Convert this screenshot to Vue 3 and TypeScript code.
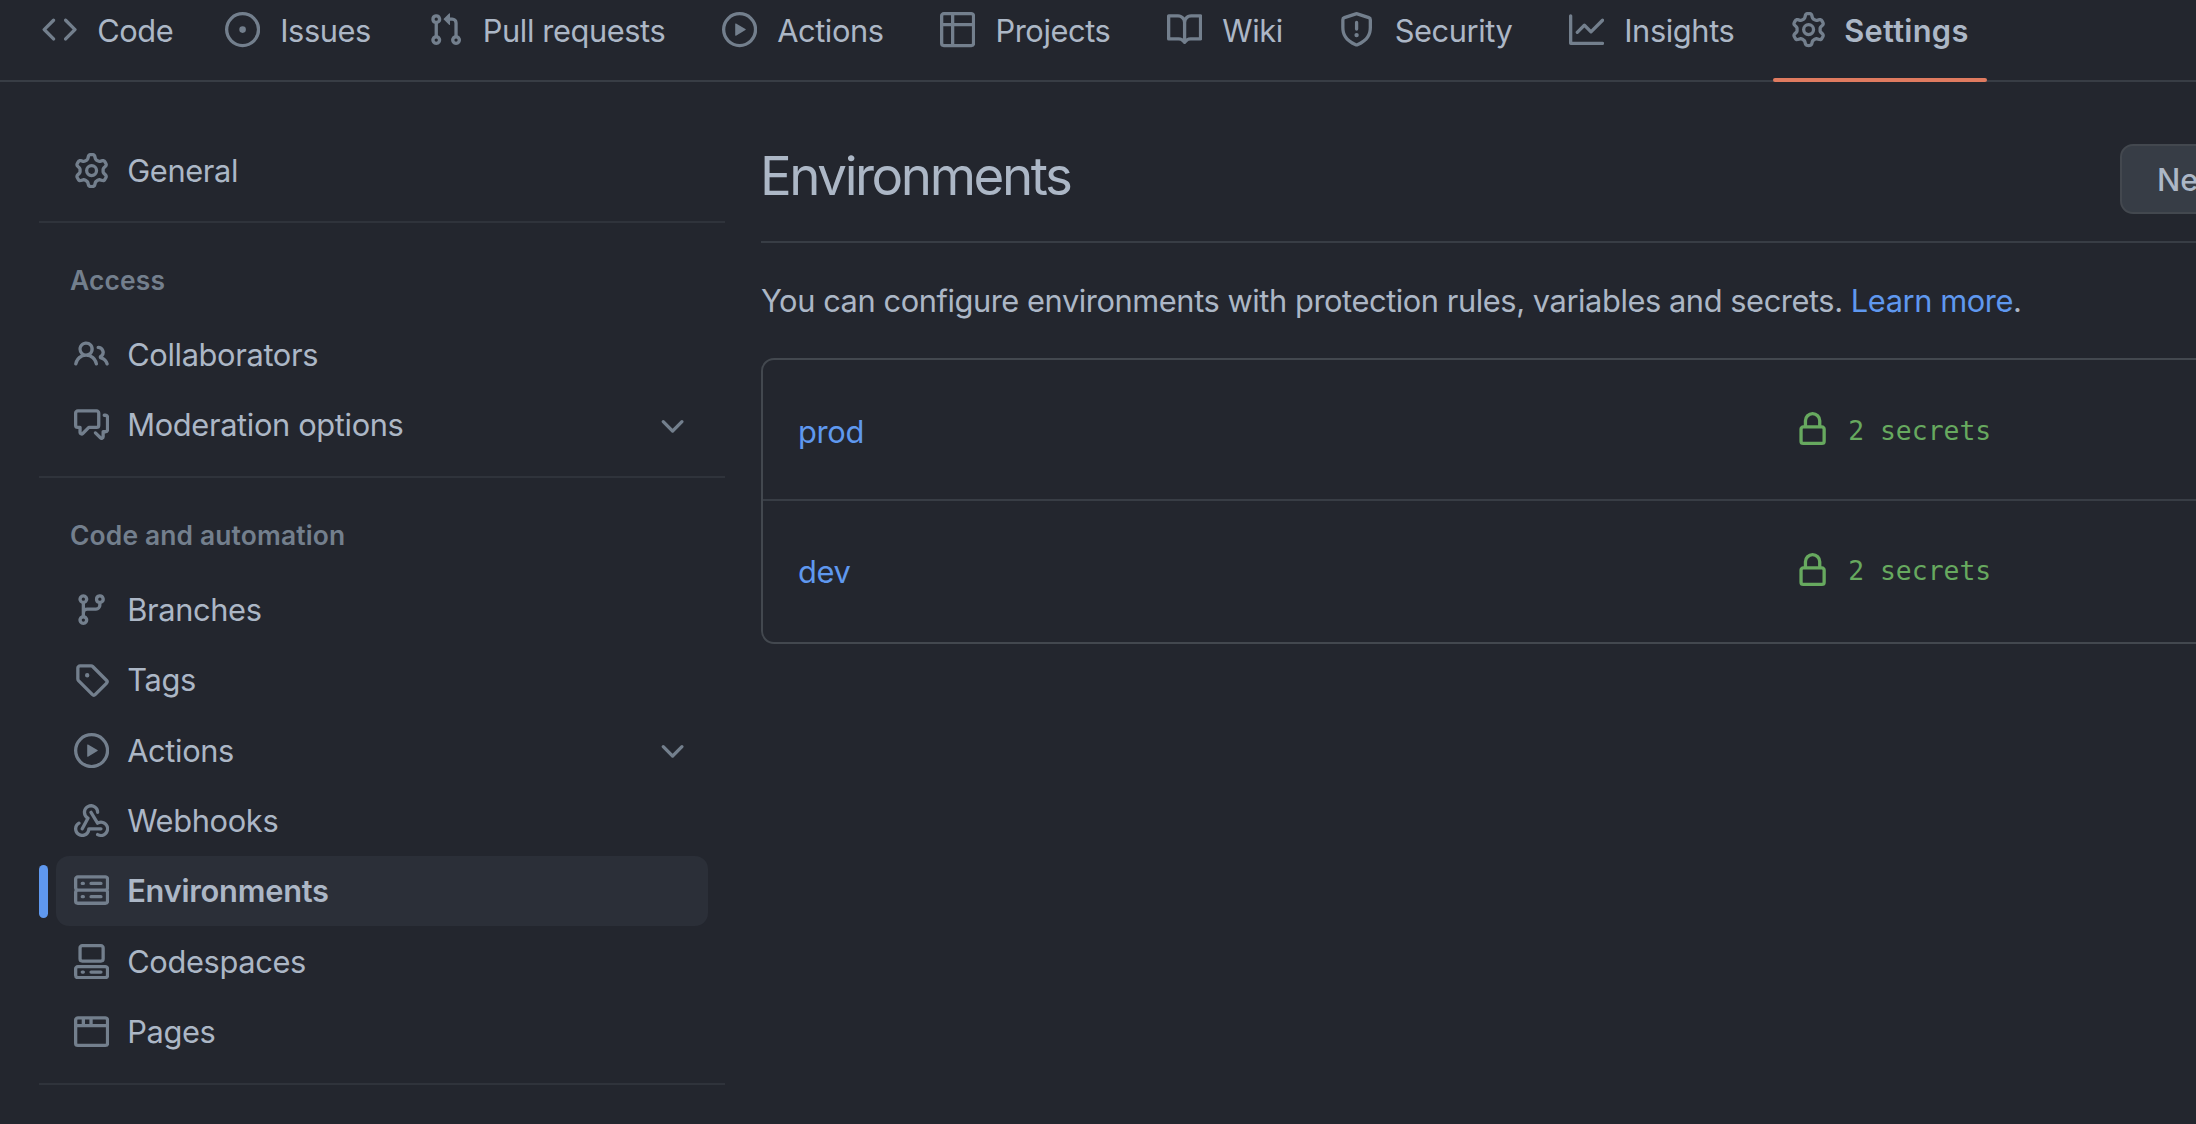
<script setup lang="ts">
const icons: Record<string, string> = {
  code: 'm11.28 3.22 4.25 4.25a.75.75 0 0 1 0 1.06l-4.25 4.25a.749.749 0 0 1-1.275-.326.749.749 0 0 1 .215-.734L13.94 8l-3.72-3.72a.749.749 0 0 1 .326-1.275.749.749 0 0 1 .734.215Zm-6.56 0a.751.751 0 0 1 1.042.018.751.751 0 0 1 .018 1.042L2.06 8l3.72 3.72a.749.749 0 0 1-.326 1.275.749.749 0 0 1-.734-.215L.47 8.53a.75.75 0 0 1 0-1.06Z',
  issue: 'M8 9.5a1.5 1.5 0 1 0 0-3 1.5 1.5 0 0 0 0 3Z M8 0a8 8 0 1 1 0 16A8 8 0 0 1 8 0ZM1.5 8a6.5 6.5 0 1 0 13 0 6.5 6.5 0 0 0-13 0Z',
  pull: 'M1.5 3.25a2.25 2.25 0 1 1 3 2.122v5.256a2.251 2.251 0 1 1-1.5 0V5.372A2.25 2.25 0 0 1 1.5 3.25Zm5.677-.177L9.573.677A.25.25 0 0 1 10 .854V2.5h1A2.5 2.5 0 0 1 13.5 5v5.628a2.251 2.251 0 1 1-1.5 0V5a1 1 0 0 0-1-1h-1v1.646a.25.25 0 0 1-.427.177L7.177 3.427a.25.25 0 0 1 0-.354ZM3.75 2.5a.75.75 0 1 0 0 1.5.75.75 0 0 0 0-1.5Zm0 9.5a.75.75 0 1 0 0 1.5.75.75 0 0 0 0-1.5Zm8.25.75a.75.75 0 1 0 1.5 0 .75.75 0 0 0-1.5 0Z',
  play: 'M8 0a8 8 0 1 1 0 16A8 8 0 0 1 8 0ZM1.5 8a6.5 6.5 0 1 0 13 0 6.5 6.5 0 0 0-13 0Zm4.879-2.773 4.264 2.559a.25.25 0 0 1 0 .428l-4.264 2.559A.25.25 0 0 1 6 10.559V5.442a.25.25 0 0 1 .379-.215Z',
  table: 'M0 1.75C0 .784.784 0 1.75 0h12.5C15.216 0 16 .784 16 1.75v12.5A1.75 1.75 0 0 1 14.25 16H1.75A1.75 1.75 0 0 1 0 14.25ZM6.5 6.5v8h7.75a.25.25 0 0 0 .25-.25V6.5Zm8-1.5V1.75a.25.25 0 0 0-.25-.25H6.5V5Zm-13 1.5v7.75c0 .138.112.25.25.25H5v-8ZM5 5V1.5H1.75a.25.25 0 0 0-.25.25V5Z',
  book: 'M0 1.75A.75.75 0 0 1 .75 1h4.253c1.227 0 2.317.59 3 1.501A3.743 3.743 0 0 1 11.006 1h4.245a.75.75 0 0 1 .75.75v10.5a.75.75 0 0 1-.75.75h-4.507a2.25 2.25 0 0 0-1.591.659l-.622.621a.75.75 0 0 1-1.06 0l-.622-.621A2.25 2.25 0 0 0 5.258 13H.75a.75.75 0 0 1-.75-.75Zm7.251 10.324.004-5.073-.002-2.253A2.25 2.25 0 0 0 5.003 2.5H1.5v9h3.757a3.75 3.75 0 0 1 1.994.574ZM8.755 4.75l-.004 7.322a3.752 3.752 0 0 1 1.992-.572H14.5v-9h-3.495a2.25 2.25 0 0 0-2.25 2.25Z',
  shield: 'M7.467.133a1.748 1.748 0 0 1 1.066 0l5.25 1.68A1.75 1.75 0 0 1 15 3.48V7c0 1.566-.32 3.182-1.303 4.682-.983 1.498-2.585 2.813-5.032 3.855a1.697 1.697 0 0 1-1.33 0c-2.447-1.042-4.049-2.357-5.032-3.855C1.32 10.182 1 8.566 1 7V3.48a1.75 1.75 0 0 1 1.217-1.667Zm.61 1.429a.25.25 0 0 0-.153 0l-5.25 1.68a.25.25 0 0 0-.174.238V7c0 1.358.275 2.666 1.057 3.86.784 1.194 2.121 2.34 4.366 3.297a.196.196 0 0 0 .154 0c2.245-.956 3.582-2.104 4.366-3.298C13.225 9.666 13.5 8.36 13.5 7V3.48a.251.251 0 0 0-.174-.237l-5.25-1.68ZM8.75 4.75v3a.75.75 0 0 1-1.5 0v-3a.75.75 0 0 1 1.5 0ZM9 10.5a1 1 0 1 1-2 0 1 1 0 0 1 2 0Z',
  graph: 'M1.5 1.75V13.5h13.75a.75.75 0 0 1 0 1.5H.75a.75.75 0 0 1-.75-.75V1.75a.75.75 0 0 1 1.5 0Zm14.28 2.53-5.25 5.25a.75.75 0 0 1-1.06 0L7 7.06 4.28 9.78a.751.751 0 0 1-1.042-.018.751.751 0 0 1-.018-1.042l3.25-3.25a.75.75 0 0 1 1.06 0L10 7.94l4.72-4.72a.751.751 0 0 1 1.042.018.751.751 0 0 1 .018 1.042Z',
  gear: 'M8 0a8.2 8.2 0 0 1 .701.031C9.444.095 9.99.645 10.16 1.29l.288 1.107c.018.066.079.158.212.224.231.114.454.243.668.386.123.082.233.09.299.071l1.103-.303c.644-.176 1.392.021 1.82.63.27.385.506.792.704 1.218.315.675.111 1.422-.364 1.891l-.814.806c-.049.048-.098.147-.088.294.016.257.016.515 0 .772-.01.147.038.246.088.294l.814.806c.475.469.679 1.216.364 1.891a7.977 7.977 0 0 1-.704 1.217c-.428.61-1.176.807-1.82.63l-1.102-.302c-.067-.019-.177-.011-.3.071a5.909 5.909 0 0 1-.668.386c-.133.066-.194.158-.211.224l-.29 1.106c-.168.646-.715 1.196-1.458 1.26a8.006 8.006 0 0 1-1.402 0c-.743-.064-1.289-.614-1.458-1.26l-.289-1.106c-.018-.066-.079-.158-.212-.224a5.738 5.738 0 0 1-.668-.386c-.123-.082-.233-.09-.299-.071l-1.103.303c-.644.176-1.392-.021-1.82-.63a8.12 8.12 0 0 1-.704-1.218c-.315-.675-.111-1.422.363-1.891l.815-.806c.05-.048.098-.147.088-.294a6.214 6.214 0 0 1 0-.772c.01-.147-.038-.246-.088-.294l-.815-.806C.635 6.045.431 5.298.746 4.623a7.92 7.92 0 0 1 .704-1.217c.428-.61 1.176-.807 1.82-.63l1.102.302c.067.019.177.011.3-.071.214-.143.437-.272.668-.386.133-.066.194-.158.211-.224l.29-1.106C6.009.645 6.556.095 7.299.03 7.53.01 7.764 0 8 0Zm-.571 1.525c-.036.003-.108.036-.137.146l-.289 1.105c-.147.561-.549.967-.998 1.189-.173.086-.34.183-.5.29-.417.278-.97.423-1.529.27l-1.103-.303c-.109-.03-.175.016-.195.045-.22.312-.412.644-.573.99-.014.031-.021.11.059.19l.815.806c.411.406.562.957.53 1.456a4.709 4.709 0 0 0 0 .582c.032.499-.119 1.05-.53 1.456l-.815.806c-.081.08-.073.159-.059.19.162.346.353.677.573.989.02.03.085.076.195.046l1.102-.303c.56-.153 1.113-.008 1.53.27.161.107.328.204.501.29.447.222.85.629.997 1.189l.289 1.105c.029.109.101.143.137.146a6.6 6.6 0 0 0 1.142 0c.036-.003.108-.036.137-.146l.289-1.105c.147-.561.549-.967.998-1.189.173-.086.34-.183.5-.29.417-.278.97-.423 1.529-.27l1.103.303c.109.029.175-.016.195-.045.22-.313.411-.644.573-.99.014-.031.021-.11-.059-.19l-.815-.806c-.411-.406-.562-.957-.53-1.456a4.709 4.709 0 0 0 0-.582c-.032-.499.119-1.05.53-1.456l.815-.806c.081-.08.073-.159.059-.19a6.464 6.464 0 0 0-.573-.989c-.02-.03-.085-.076-.195-.046l-1.102.303c-.56.153-1.113.008-1.53-.27a4.44 4.44 0 0 0-.501-.29c-.447-.222-.85-.629-.997-1.189l-.289-1.105c-.029-.11-.101-.143-.137-.146a6.6 6.6 0 0 0-1.142 0ZM11 8a3 3 0 1 1-6 0 3 3 0 0 1 6 0ZM9.5 8a1.5 1.5 0 1 0-3.001.001A1.5 1.5 0 0 0 9.5 8Z',
  people: 'M2 5.5a3.5 3.5 0 1 1 5.898 2.549 5.508 5.508 0 0 1 3.034 4.084.75.75 0 1 1-1.482.235 4 4 0 0 0-7.9 0 .75.75 0 0 1-1.482-.236A5.507 5.507 0 0 1 3.102 8.05 3.493 3.493 0 0 1 2 5.5ZM11 4a3.001 3.001 0 0 1 2.22 5.018 5.01 5.01 0 0 1 2.56 3.012.749.749 0 0 1-.885.954.752.752 0 0 1-.549-.514 3.507 3.507 0 0 0-2.522-2.372.75.75 0 0 1-.574-.73v-.352a.75.75 0 0 1 .416-.672A1.5 1.5 0 0 0 11 5.5.75.75 0 0 1 11 4Zm-5.5-.5a2 2 0 1 0-.001 3.999A2 2 0 0 0 5.5 3.5Z',
  discussion: 'M1.75 1h8.5c.966 0 1.75.784 1.75 1.75v5.5A1.75 1.75 0 0 1 10.25 10H7.061l-2.574 2.573A1.458 1.458 0 0 1 2 11.543V10h-.25A1.75 1.75 0 0 1 0 8.25v-5.5C0 1.784.784 1 1.75 1ZM1.5 2.75v5.5c0 .138.112.25.25.25h1a.75.75 0 0 1 .75.75v2.19l2.72-2.72a.749.749 0 0 1 .53-.22h3.5a.25.25 0 0 0 .25-.25v-5.5a.25.25 0 0 0-.25-.25h-8.5a.25.25 0 0 0-.25.25Zm13 2a.25.25 0 0 0-.25-.25h-.5a.75.75 0 0 1 0-1.5h.5c.966 0 1.75.784 1.75 1.75v5.5A1.75 1.75 0 0 1 14.25 12H14v1.543a1.458 1.458 0 0 1-2.487 1.03L9.22 12.28a.749.749 0 0 1 .326-1.275.749.749 0 0 1 .734.215l2.22 2.22v-2.19a.75.75 0 0 1 .75-.75h1a.25.25 0 0 0 .25-.25Z',
  chevron: 'M12.78 5.22a.749.749 0 0 1 0 1.06l-4.25 4.25a.749.749 0 0 1-1.06 0L3.22 6.28a.749.749 0 1 1 1.06-1.06L8 8.939l3.72-3.719a.749.749 0 0 1 1.06 0Z',
  branch: 'M9.5 3.25a2.25 2.25 0 1 1 3 2.122V6A2.5 2.5 0 0 1 10 8.5H6a1 1 0 0 0-1 1v1.128a2.251 2.251 0 1 1-1.5 0V5.372a2.25 2.25 0 1 1 1.5 0v1.836A2.493 2.493 0 0 1 6 7h4a1 1 0 0 0 1-1v-.628A2.25 2.25 0 0 1 9.5 3.25Zm-6 0a.75.75 0 1 0 1.5 0 .75.75 0 0 0-1.5 0Zm8.25-.75a.75.75 0 1 0 0 1.5.75.75 0 0 0 0-1.5ZM4.25 12a.75.75 0 1 0 0 1.5.75.75 0 0 0 0-1.5Z',
  tag: 'M1 7.775V2.75C1 1.784 1.784 1 2.75 1h5.025c.464 0 .91.184 1.238.513l6.25 6.25a1.75 1.75 0 0 1 0 2.474l-5.026 5.026a1.75 1.75 0 0 1-2.474 0l-6.25-6.25A1.752 1.752 0 0 1 1 7.775Zm1.5 0c0 .066.026.13.073.177l6.25 6.25a.25.25 0 0 0 .354 0l5.025-5.025a.25.25 0 0 0 0-.354l-6.25-6.25a.25.25 0 0 0-.177-.073H2.75a.25.25 0 0 0-.25.25ZM6 5a1 1 0 1 1 0 2 1 1 0 0 1 0-2Z',
  webhook: 'M5.5 4.25a2.25 2.25 0 0 1 4.5 0 .75.75 0 0 0 1.5 0 3.75 3.75 0 1 0-6.14 2.889l-2.272 4.258a.75.75 0 0 0 1.324.706L7 7.25a.75.75 0 0 0-.309-1.015A2.25 2.25 0 0 1 5.5 4.25Z M7.364 3.607a.75.75 0 0 1 1.03.257l2.608 4.349a3.75 3.75 0 1 1-.628 6.785.75.75 0 0 1 .752-1.299 2.25 2.25 0 1 0-.033-3.88.75.75 0 0 1-1.03-.256L7.107 4.636a.75.75 0 0 1 .257-1.03Z M2.9 8.776A.75.75 0 0 1 2.625 9.8 2.25 2.25 0 1 0 6 11.75a.75.75 0 0 1 .75-.751h5.5a.75.75 0 0 1 0 1.5H7.425a3.751 3.751 0 1 1-5.55-3.998.75.75 0 0 1 1.024.274Z',
  server: 'M1.75 1h12.5c.966 0 1.75.784 1.75 1.75v4c0 .372-.116.717-.314 1 .198.283.314.628.314 1v4a1.75 1.75 0 0 1-1.75 1.75H1.75A1.75 1.75 0 0 1 0 12.75v-4c0-.358.109-.707.314-1a1.739 1.739 0 0 1-.314-1v-4C0 1.784.784 1 1.75 1ZM1.5 2.75v4c0 .138.112.25.25.25h12.5a.25.25 0 0 0 .25-.25v-4a.25.25 0 0 0-.25-.25H1.75a.25.25 0 0 0-.25.25Zm.25 5.75a.25.25 0 0 0-.25.25v4c0 .138.112.25.25.25h12.5a.25.25 0 0 0 .25-.25v-4a.25.25 0 0 0-.25-.25ZM7 4.75A.75.75 0 0 1 7.75 4h4.5a.75.75 0 0 1 0 1.5h-4.5A.75.75 0 0 1 7 4.75ZM7.75 10h4.5a.75.75 0 0 1 0 1.5h-4.5a.75.75 0 0 1 0-1.5ZM3 4.75A.75.75 0 0 1 3.75 4h.5a.75.75 0 0 1 0 1.5h-.5A.75.75 0 0 1 3 4.75ZM3.75 10h.5a.75.75 0 0 1 0 1.5h-.5a.75.75 0 0 1 0-1.5Z',
  codespaces: 'M0 11.25c0-.966.784-1.75 1.75-1.75h12.5c.966 0 1.75.784 1.75 1.75v3A1.75 1.75 0 0 1 14.25 16H1.75A1.75 1.75 0 0 1 0 14.25Zm2-9.5C2 .784 2.784 0 3.75 0h8.5C13.216 0 14 .784 14 1.75v5a1.75 1.75 0 0 1-1.75 1.75h-8.5A1.75 1.75 0 0 1 2 6.75Zm1.75-.25a.25.25 0 0 0-.25.25v5c0 .138.112.25.25.25h8.5a.25.25 0 0 0 .25-.25v-5a.25.25 0 0 0-.25-.25Zm-2 9.5a.25.25 0 0 0-.25.25v3c0 .138.112.25.25.25h12.5a.25.25 0 0 0 .25-.25v-3a.25.25 0 0 0-.25-.25Z M7 12.75a.75.75 0 0 1 .75-.75h4.5a.75.75 0 0 1 0 1.5h-4.5a.75.75 0 0 1-.75-.75Zm-4 0a.75.75 0 0 1 .75-.75h.5a.75.75 0 0 1 0 1.5h-.5a.75.75 0 0 1-.75-.75Z',
  browser: 'M0 2.75C0 1.784.784 1 1.75 1h12.5c.966 0 1.75.784 1.75 1.75v10.5A1.75 1.75 0 0 1 14.25 15H1.75A1.75 1.75 0 0 1 0 13.25ZM14.5 6h-13v7.25c0 .138.112.25.25.25h12.5a.25.25 0 0 0 .25-.25Zm-6-3.5v2h6V2.75a.25.25 0 0 0-.25-.25ZM5 2.5v2h2v-2Zm-3.25 0a.25.25 0 0 0-.25.25V4.5h2v-2Z',
  lock: 'M4 4a4 4 0 0 1 8 0v2h.25c.966 0 1.75.784 1.75 1.75v5.5A1.75 1.75 0 0 1 12.25 15h-8.5A1.75 1.75 0 0 1 2 13.25v-5.5C2 6.784 2.784 6 3.75 6H4Zm8.25 3.5h-8.5a.25.25 0 0 0-.25.25v5.5c0 .138.112.25.25.25h8.5a.25.25 0 0 0 .25-.25v-5.5a.25.25 0 0 0-.25-.25ZM10.5 6V4a2.5 2.5 0 1 0-5 0v2Z',
}

interface NavItem {
  label: string
  icon: string
  active?: boolean
  expandable?: boolean
}

const tabs: NavItem[] = [
  { label: 'Code', icon: 'code' },
  { label: 'Issues', icon: 'issue' },
  { label: 'Pull requests', icon: 'pull' },
  { label: 'Actions', icon: 'play' },
  { label: 'Projects', icon: 'table' },
  { label: 'Wiki', icon: 'book' },
  { label: 'Security', icon: 'shield' },
  { label: 'Insights', icon: 'graph' },
  { label: 'Settings', icon: 'gear', active: true },
]

const sections: { heading?: string; items: NavItem[] }[] = [
  { items: [{ label: 'General', icon: 'gear' }] },
  {
    heading: 'Access',
    items: [
      { label: 'Collaborators', icon: 'people' },
      { label: 'Moderation options', icon: 'discussion', expandable: true },
    ],
  },
  {
    heading: 'Code and automation',
    items: [
      { label: 'Branches', icon: 'branch' },
      { label: 'Tags', icon: 'tag' },
      { label: 'Actions', icon: 'play', expandable: true },
      { label: 'Webhooks', icon: 'webhook' },
      { label: 'Environments', icon: 'server', active: true },
      { label: 'Codespaces', icon: 'codespaces' },
      { label: 'Pages', icon: 'browser' },
    ],
  },
]

const environments = ['prod', 'dev']
</script>

<template>
  <div class="page">
    <nav class="tabs">
      <a v-for="tab in tabs" :key="tab.label" class="tab" :class="{ active: tab.active }">
        <svg class="icon" viewBox="0 0 16 16"><path :d="icons[tab.icon]" /></svg>
        <span>{{ tab.label }}</span>
      </a>
    </nav>

    <div class="layout">
      <aside class="sidebar">
        <section v-for="(section, i) in sections" :key="i" class="section">
          <h3 v-if="section.heading" class="section-heading">{{ section.heading }}</h3>
          <a
            v-for="item in section.items"
            :key="item.label"
            class="side-item"
            :class="{ active: item.active }"
          >
            <svg class="icon" viewBox="0 0 16 16"><path :d="icons[item.icon]" /></svg>
            <span class="side-label">{{ item.label }}</span>
            <svg v-if="item.expandable" class="icon chevron" viewBox="0 0 16 16"><path :d="icons.chevron" /></svg>
          </a>
        </section>
      </aside>

      <main class="main">
        <header class="header">
          <h1 class="title">Environments</h1>
          <button class="new-button">New environment</button>
        </header>
        <p class="intro">
          You can configure environments with protection rules, variables and secrets.
          <a class="link">Learn more</a>.
        </p>
        <div class="env-box">
          <div v-for="env in environments" :key="env" class="env-row">
            <a class="env-name">{{ env }}</a>
            <span class="env-secrets">
              <svg class="icon lock" viewBox="0 0 16 16"><path :d="icons.lock" /></svg>
              <span>2 secrets</span>
            </span>
          </div>
        </div>
      </main>
    </div>
  </div>
</template>

<style>
html,
body {
  margin: 0;
  background: #23262e;
  overflow: hidden;
}
</style>

<style scoped>
.page {
  width: 2196px;
  height: 1124px;
  overflow: hidden;
  background: #23262e;
  color: #acb7c6;
  font-family: Inter, "Liberation Sans", sans-serif;
  font-size: 30.8px;
  letter-spacing: -0.3px;
}

.icon {
  flex: none;
  width: 35.2px;
  height: 35.2px;
  fill: #737f8d;
}

.tabs {
  display: flex;
  gap: 20.6px;
  height: 80px;
  padding-left: 24px;
  border-bottom: 2px solid #383d45;
  letter-spacing: -0.4px;
}

.tab {
  position: relative;
  display: flex;
  align-items: center;
  gap: 20px;
  height: 60px;
  padding: 0 18px;
}

.tab:first-child {
  padding-right: 13px;
}

.tab.active {
  gap: 18px;
  font-weight: 600;
  letter-spacing: 0.3px;
}

.tab.active::after {
  content: "";
  position: absolute;
  left: 0;
  right: 0;
  top: 78px;
  height: 4px;
  border-radius: 2px;
  background: #e07b60;
}

.layout {
  display: flex;
  gap: 36px;
  padding-left: 39px;
}

.sidebar {
  flex: none;
  width: 686px;
  padding-top: 53px;
  letter-spacing: -0.35px;
}

.section {
  padding-bottom: 16px;
  border-bottom: 2px solid #2f333b;
}

.section-heading {
  margin: 0;
  padding: 37px 0 19px 31px;
  font-size: 26.4px;
  line-height: 40px;
  font-weight: 600;
  letter-spacing: 0.15px;
  color: #737f8d;
}

.side-item {
  position: relative;
  display: flex;
  align-items: center;
  gap: 18px;
  height: 70.4px;
  margin: 0 17px;
  padding: 0 18px;
  border-radius: 13px;
}

.side-item.active {
  background: #2b2f38;
  font-weight: 600;
  letter-spacing: -0.25px;
}

.side-item.active::before {
  content: "";
  position: absolute;
  left: -17px;
  top: 9px;
  width: 9px;
  height: 53px;
  border-radius: 5px;
  background: #5f98ef;
}

.side-label {
  flex: 1;
}

.chevron {
  margin-top: 3px;
}

.main {
  flex: none;
  width: 1692px;
}

.header {
  display: flex;
  align-items: center;
  justify-content: space-between;
  margin-top: 62px;
  padding-bottom: 27px;
  border-bottom: 2px solid #383d45;
}

.title {
  margin: 0 0 6px -1px;
  font-size: 52.8px;
  line-height: 64px;
  font-weight: 400;
  letter-spacing: -2.4px;
}

.new-button {
  height: 70px;
  padding: 0 35px;
  border: 2px solid #43484f;
  border-radius: 13px;
  background: #373d46;
  color: #acb7c6;
  font: inherit;
  font-weight: 500;
  white-space: nowrap;
}

.intro {
  margin: 35px 0 34px;
  line-height: 46px;
  letter-spacing: -0.43px;
}

.link,
.env-name {
  color: #5f98ef;
}

.env-box {
  border: 2px solid #43484f;
  border-radius: 13px;
}

.env-row {
  box-sizing: border-box;
  display: flex;
  align-items: center;
  height: 139px;
  padding: 3px 0 0 35px;
}

.env-row + .env-row {
  height: 143px;
  padding-top: 0;
  border-top: 2px solid #383d45;
}

.env-name {
  width: 997px;
}

.env-secrets {
  display: flex;
  align-items: center;
  gap: 18px;
  margin-top: -2px;
  color: #67a95f;
  font-family: "DejaVu Sans Mono", monospace;
  font-size: 26.4px;
  letter-spacing: 0;
}

.lock {
  fill: #67a95f;
}
</style>
